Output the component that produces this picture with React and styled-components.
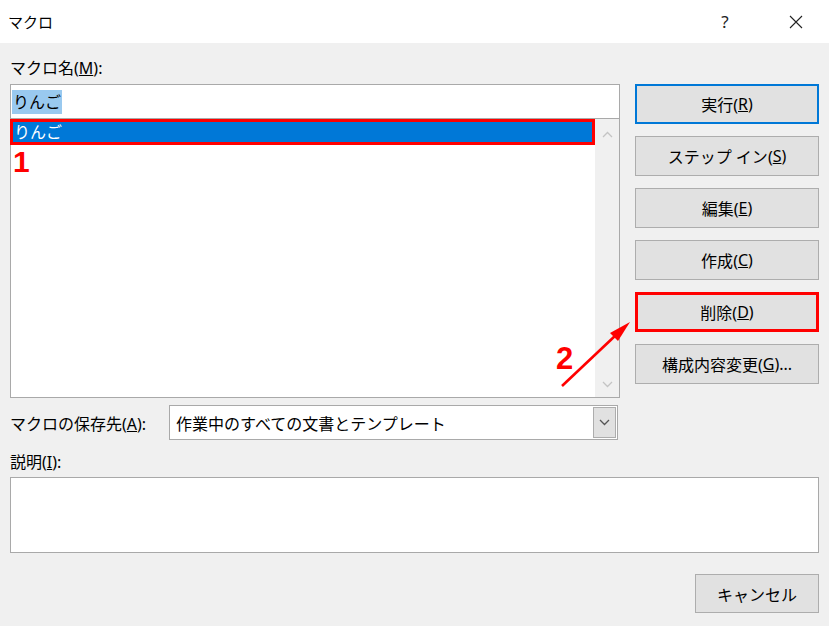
import styled, { createGlobalStyle } from "styled-components";

const GlobalStyle = createGlobalStyle`
  html, body {
    margin: 0;
    padding: 0;
    background: #f0f0f0;
  }
  body {
    font-family: "Noto Sans", "Noto Sans CJK JP", sans-serif;
    color: #000;
  }
`;

const Dialog = styled.div`
  position: relative;
  width: 829px;
  height: 626px;
  background: #f0f0f0;
  overflow: hidden;
  font-size: 16px;
`;

const TitleBar = styled.header`
  height: 43px;
  background: #fff;
  display: flex;
  align-items: center;
  padding: 0 18px 0 8px;
`;

const Title = styled.span`
  flex: 1;
  font-size: 15px;
`;

const TitleButton = styled.span`
  width: ${(p) => p.w}px;
  margin-left: ${(p) => p.ml || 0}px;
  display: flex;
  align-items: center;
  justify-content: center;
  font-size: 17px;
  color: #222;
`;

const Body = styled.div`
  padding: 14px 10px 0 10px;
`;

const Top = styled.div`
  display: grid;
  grid-template-columns: 610px 184px;
  column-gap: 15px;
`;

const LeftCol = styled.div`
  display: flex;
  flex-direction: column;
`;

const Label = styled.div`
  height: 22px;
  line-height: 22px;
  white-space: nowrap;
  margin-top: ${(p) => p.mt || 0}px;
`;

const NameInput = styled.div`
  margin-top: 5px;
  height: 35px;
  box-sizing: border-box;
  border: 1px solid #a9a9a9;
  background: #fff;
  display: flex;
  align-items: center;
  padding-left: 1px;
  font-size: 16px;
`;

const Selected = styled.span`
  background: #99c9ef;
  line-height: 24px;
  padding: 0 1px;
`;

const List = styled.div`
  position: relative;
  height: 279px;
  box-sizing: border-box;
  border: 1px solid #a9a9a9;
  border-top: 0;
  background: #fff;
  display: flex;
`;

const Items = styled.div`
  flex: 1;
`;

const Row = styled.div`
  margin-left: -1px;
  height: 26px;
  box-sizing: border-box;
  border: 3px solid #ff0000;
  background: #0078d7;
  color: #fff;
  line-height: 20px;
  padding-left: 1px;
  font-size: 16px;
`;

const Scrollbar = styled.div`
  width: 24px;
  background: #f0f0f0;
  display: flex;
  flex-direction: column;
  justify-content: space-between;
  align-items: center;
  padding: 12px 0 9px;
`;

const Marker = styled.span`
  position: absolute;
  left: ${(p) => p.x}px;
  top: ${(p) => p.y}px;
  font-family: "Liberation Sans", Arial, sans-serif;
  font-weight: bold;
  font-size: ${(p) => p.size}px;
  line-height: 1;
  color: #ff0000;
`;

const ComboRow = styled.div`
  margin-top: 7px;
  height: 35px;
  display: flex;
  align-items: center;
`;

const ComboLabel = styled.div`
  width: 159px;
  white-space: nowrap;
`;

const Combo = styled.div`
  flex: 1;
  margin-right: 2px;
  height: 35px;
  box-sizing: border-box;
  border: 1px solid #a9a9a9;
  background: #fff;
  display: flex;
  align-items: center;
  padding-left: 6px;
`;

const ComboText = styled.span`
  flex: 1;
`;

const DropButton = styled.div`
  width: 23px;
  height: 31px;
  margin-right: 1px;
  box-sizing: border-box;
  background: #e1e1e1;
  border: 1px solid #adadad;
  display: flex;
  align-items: center;
  justify-content: center;
`;

const RightCol = styled.div`
  display: flex;
  flex-direction: column;
  gap: 12px;
  padding-top: 27px;
`;

const Button = styled.button`
  width: ${(p) => p.w || 184}px;
  height: ${(p) => p.h || 40}px;
  box-sizing: border-box;
  background: #e1e1e1;
  border: ${(p) =>
    p.variant === "default"
      ? "2px solid #0078d7"
      : p.variant === "marked"
      ? "3px solid #ff0000"
      : "1px solid #adadad"};
  font-family: inherit;
  font-size: 16px;
  color: #000;
  padding: 0;
  display: flex;
  align-items: center;
  justify-content: center;
`;

const Description = styled.div`
  margin-top: 4px;
  height: 76px;
  box-sizing: border-box;
  border: 1px solid #a9a9a9;
  background: #fff;
`;

const Footer = styled.div`
  margin-top: 21px;
  display: flex;
  justify-content: flex-end;
`;

const Overlay = styled.svg`
  position: absolute;
  left: 0;
  top: 0;
  pointer-events: none;
`;

const Chevron = ({ up, color = "#c4c4c4" }) => (
  <svg width="11" height="7" viewBox="0 0 11 7">
    <path
      d={up ? "M1 6 L5.5 1.5 L10 6" : "M1 1 L5.5 5.5 L10 1"}
      fill="none"
      stroke={color}
      strokeWidth="1.3"
    />
  </svg>
);

const CloseIcon = () => (
  <svg width="14" height="14" viewBox="0 0 14 14">
    <path d="M1 1 L13 13 M13 1 L1 13" stroke="#222" strokeWidth="1.1" />
  </svg>
);

const buttons = [
  { text: "実行", key: "R", variant: "default" },
  { text: "ステップ イン", key: "S" },
  { text: "編集", key: "E" },
  { text: "作成", key: "C" },
  { text: "削除", key: "D", variant: "marked" },
  { text: "構成内容変更", key: "G", tail: "..." },
];

export default function App() {
  return (
    <Dialog>
      <GlobalStyle />
      <TitleBar>
        <Title>マクロ</Title>
        <TitleButton w={30}>?</TitleButton>
        <TitleButton w={30} ml={41}>
          <CloseIcon />
        </TitleButton>
      </TitleBar>
      <Body>
        <Top>
          <LeftCol>
            <Label>
              マクロ名(<u>M</u>):
            </Label>
            <NameInput>
              <Selected>りんご</Selected>
            </NameInput>
            <List>
              <Items>
                <Row>りんご</Row>
              </Items>
              <Scrollbar>
                <Chevron up />
                <Chevron />
              </Scrollbar>
              <Marker x={2} y={28} size={30}>
                1
              </Marker>
            </List>
            <ComboRow>
              <ComboLabel>
                マクロの保存先(<u>A</u>):
              </ComboLabel>
              <Combo>
                <ComboText>作業中のすべての文書とテンプレート</ComboText>
                <DropButton>
                  <Chevron color="#555" />
                </DropButton>
              </Combo>
            </ComboRow>
          </LeftCol>
          <RightCol>
            {buttons.map((b) => (
              <Button key={b.key} variant={b.variant}>
                {b.text}(<u>{b.key}</u>){b.tail}
              </Button>
            ))}
          </RightCol>
        </Top>
        <Label mt={11}>
          説明(<u>I</u>):
        </Label>
        <Description />
        <Footer>
          <Button w={124} h={39}>
            キャンセル
          </Button>
        </Footer>
      </Body>
      <Marker x={556} y={343} size={31}>
        2
      </Marker>
      <Overlay width="829" height="626" viewBox="0 0 829 626">
        <line x1="562" y1="386" x2="616" y2="335" stroke="#ff0000" strokeWidth="2.6" />
        <polygon points="630,322 618,341 610,333" fill="#ff0000" />
      </Overlay>
    </Dialog>
  );
}
